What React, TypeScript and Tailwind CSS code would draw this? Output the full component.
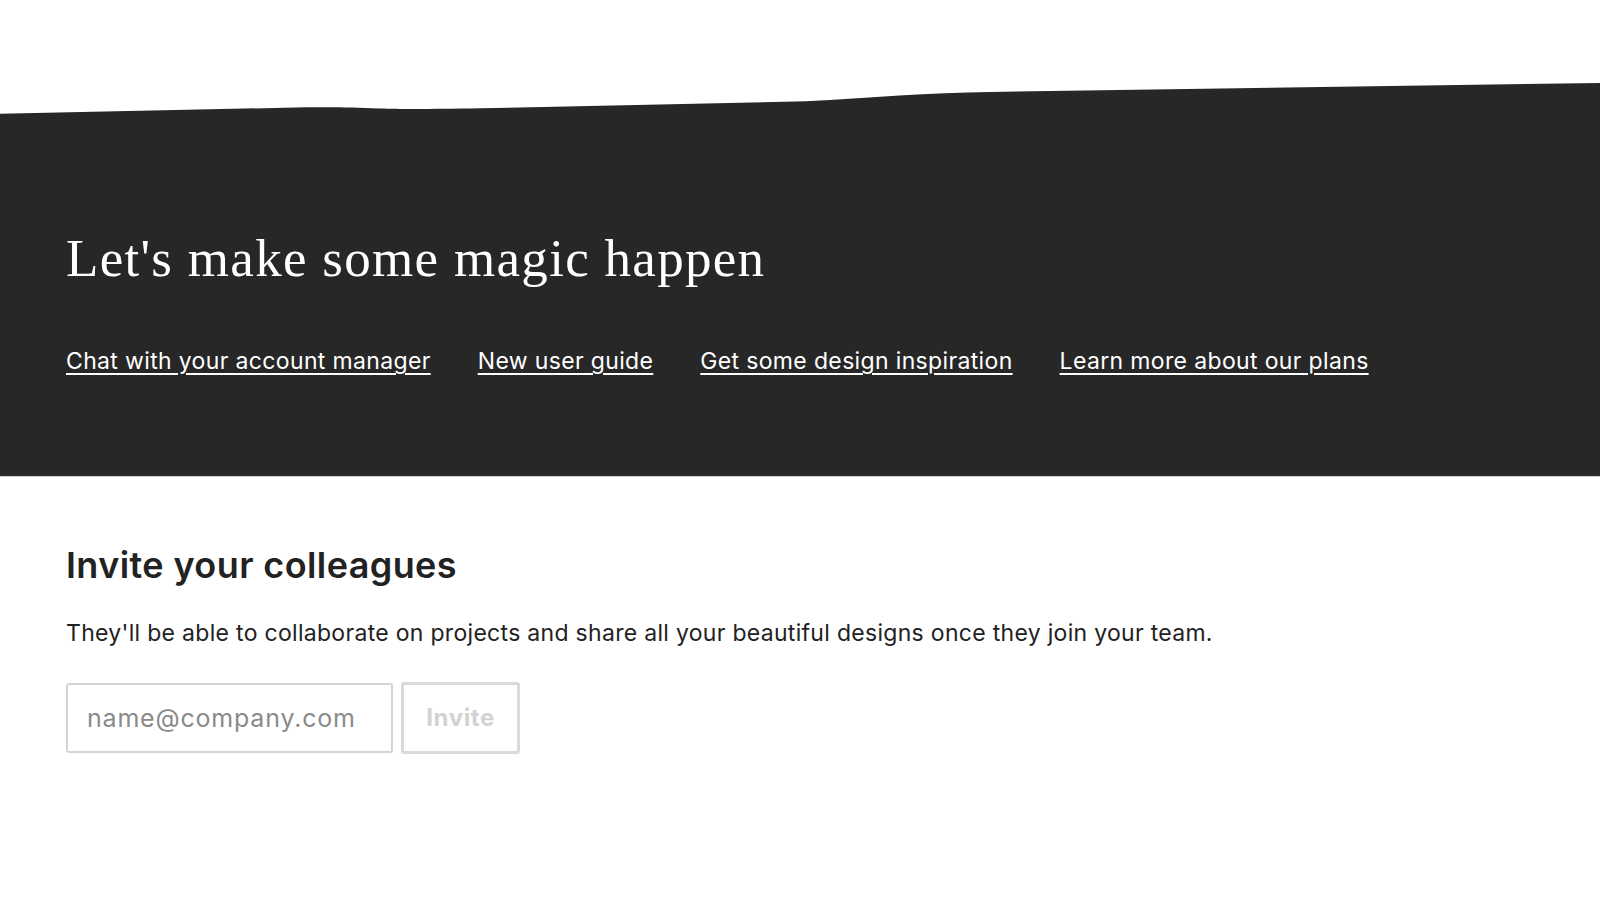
import React from "react";

const sans = "font-['Inter','Liberation_Sans',sans-serif]";

export default function App() {
  return (
    <div className="min-h-[919px] w-full bg-white">
      <div className="h-[78px]" />
      <svg
        className="block h-[36px] w-full"
        viewBox="0 0 1600 36"
        preserveAspectRatio="none"
      >
        <path
          d="M0 35.7 L306 29.3 C330 29 350 29 380 30.5 C400 31.2 428 31.2 480 30.3 L806 23.3 C870 20 930 14.5 990 14 L1600 5 L1600 36 L0 36 Z"
          fill="#282728"
        />
      </svg>
      <section className="bg-[#282728] pl-[66px] pt-[113px] pb-[101px] border-b border-[#d0d0d0]">
        <h1 className="font-['Liberation_Serif',serif] text-[53px] leading-[62px] tracking-[1.3px] text-white">
          Let's make some magic happen
        </h1>
        <nav className={`mt-[58px] flex gap-[47px] text-[23px] leading-[28px] tracking-[0.35px] text-white ${sans}`}>
          <a href="#" className="underline underline-offset-[4px] decoration-[1.5px]">Chat with your account manager</a>
          <a href="#" className="underline underline-offset-[4px] decoration-[1.5px]">New user guide</a>
          <a href="#" className="underline underline-offset-[4px] decoration-[1.5px]">Get some design inspiration</a>
          <a href="#" className="underline underline-offset-[4px] decoration-[1.5px]">Learn more about our plans</a>
        </nav>
      </section>
      <section className={`pl-[66px] pt-[66px] ${sans}`}>
        <h2 className="text-[36px] leading-[44px] tracking-[0.4px] font-semibold text-[#222222]">
          Invite your colleagues
        </h2>
        <p className="mt-[32px] text-[23px] leading-[28px] tracking-[0.3px] text-[#222222]">
          They'll be able to collaborate on projects and share all your beautiful designs once they join your team.
        </p>
        <div className="mt-[35px] flex items-center gap-[8px]">
          <input
            type="email"
            placeholder="name@company.com"
            className="h-[70px] w-[327px] rounded-[3px] border-2 border-[#d4d4d4] px-[19px] text-[25px] tracking-[0.8px] text-[#222] placeholder:text-[#8a8a8a] outline-none"
          />
          <button className="h-[72px] w-[119px] rounded-[3px] border-[3px] border-[#dadada] text-[24px] tracking-[0.6px] font-bold text-[#d2d2d2]">
            Invite
          </button>
        </div>
      </section>
    </div>
  );
}
